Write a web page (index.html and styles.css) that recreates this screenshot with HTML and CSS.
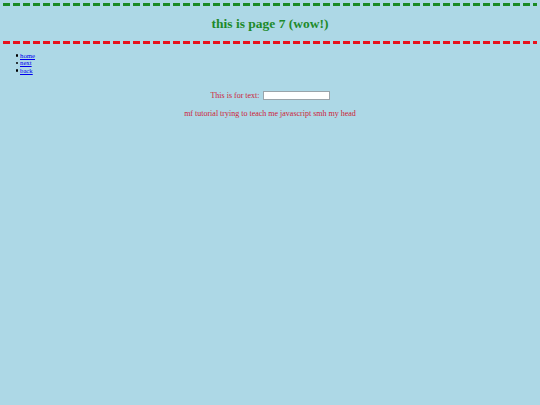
FILE: index.html
```html
<!DOCTYPE html>
<html>
<head>
<meta charset="utf-8">
<title>page 7</title>
<link rel="stylesheet" href="styles.css">
</head>
<body>
<header class="header">
  <h1 class="title">this is page 7 (wow!)</h1>
</header>
<ul class="nav">
  <li class="nav-item"><a href="#">home</a></li>
  <li class="nav-item"><a href="#">next</a></li>
  <li class="nav-item"><a href="#">back</a></li>
</ul>
<div class="form-line">
  <label class="label" for="t">This is for text:</label>
  <input class="text-input" id="t" type="text">
</div>
<p class="note">mf tutorial trying to teach me javascript smh my head</p>
</body>
</html>
```
FILE: styles.css
```css
html, body {
  margin: 0;
  padding: 0;
}
body {
  background: #add8e6;
  font-family: "Liberation Serif", "Times New Roman", serif;
  width: 540px;
  height: 405px;
  overflow: hidden;
}
.header {
  margin: 3px 3px 0;
  padding: 3px 0;
  background:
    repeating-linear-gradient(to right, #1a8a24 0 7px, transparent 7px 10px) left top / 100% 3px no-repeat,
    repeating-linear-gradient(to right, #e8121c 0 7px, transparent 7px 10px) left bottom / 100% 3px no-repeat;
}
.title {
  margin: 0;
  padding: 10px 0;
  font-size: 13.5px;
  line-height: 15px;
  font-weight: bold;
  text-align: center;
  color: #1e8a2a;
}
.nav {
  margin: 7.5px 0 0;
  padding: 0 0 0 20px;
  font-size: 6.75px;
  line-height: 7.5px;
  list-style: none;
}
.nav-item::before {
  content: "";
  display: inline-block;
  width: 2.5px;
  height: 2.5px;
  border-radius: 50%;
  background: #000;
  margin-left: -4.5px;
  margin-right: 2px;
  vertical-align: 1px;
}
.nav a {
  color: #0000ee;
}
.form-line {
  margin-top: 16.5px;
  height: 10px;
  line-height: 10px;
  text-align: center;
  font-size: 8px;
  color: #cc2236;
}
.label {
  vertical-align: middle;
}
.text-input {
  box-sizing: border-box;
  width: 67px;
  height: 9px;
  margin: 0 0 0 1px;
  padding: 0;
  border: 1px solid #9aa4aa;
  background: #fff;
  vertical-align: middle;
}
.note {
  margin: 8px 0 0;
  font-size: 8px;
  line-height: 9px;
  text-align: center;
  color: #cc2236;
}
```
